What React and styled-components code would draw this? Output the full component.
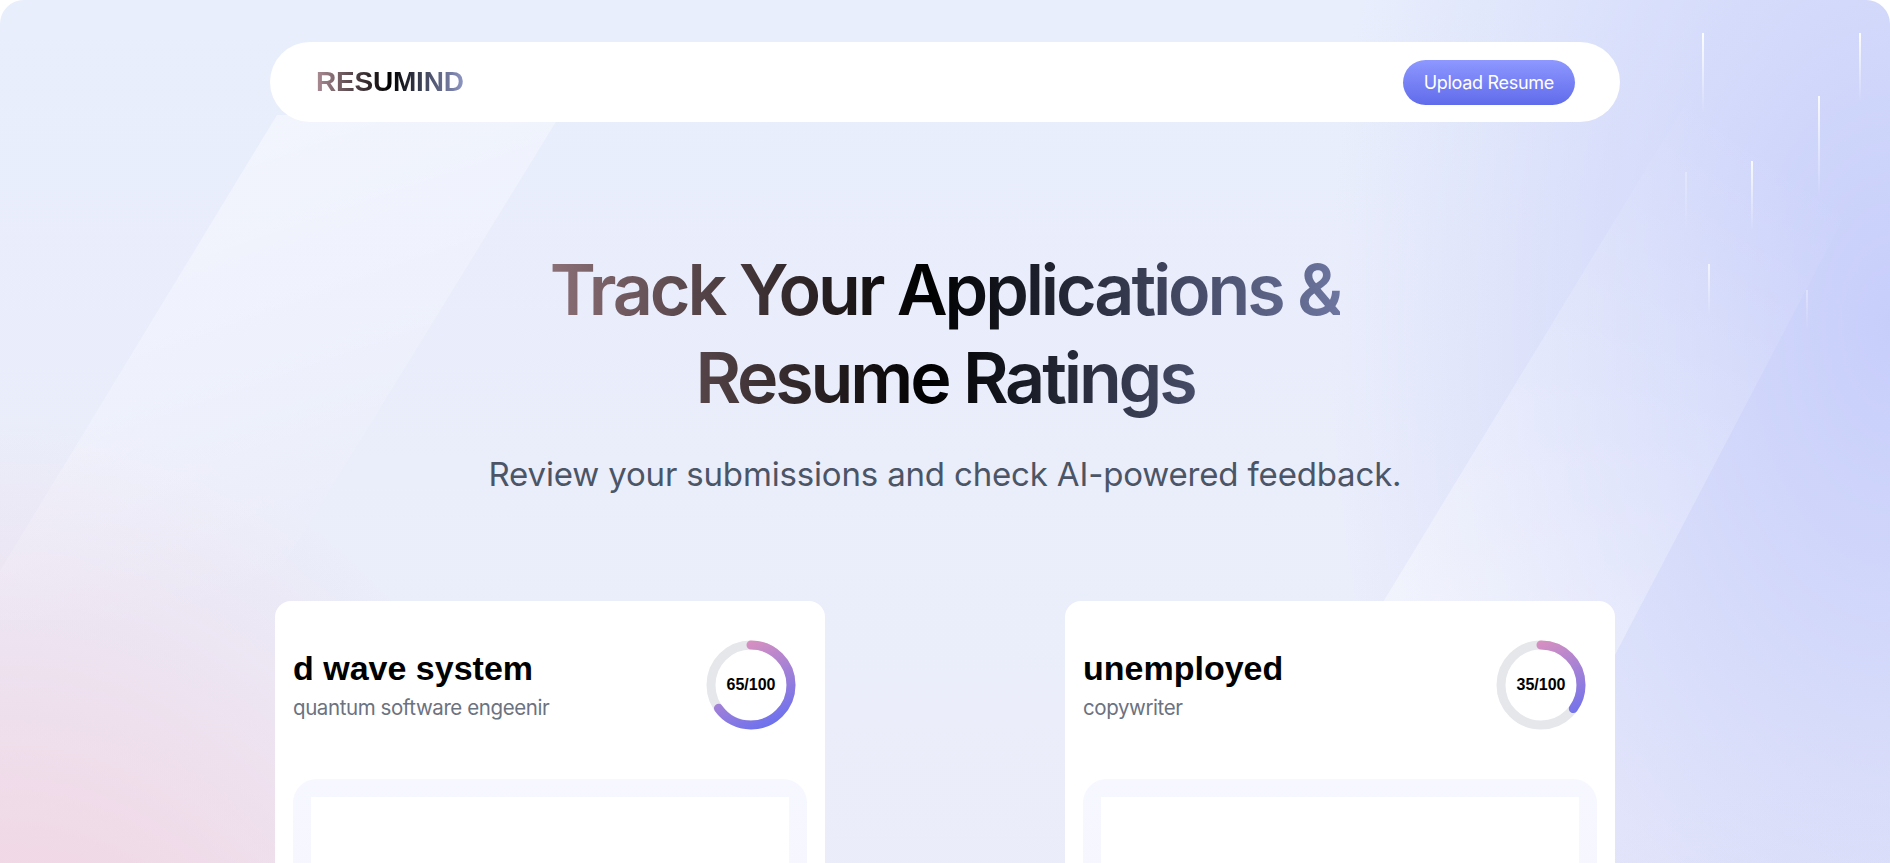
import React from "react";
import styled, { createGlobalStyle } from "styled-components";

const GlobalStyle = createGlobalStyle`
	html, body {
		margin: 0;
		padding: 0;
		background: #ffffff;
	}
	* {
		box-sizing: border-box;
	}
`;

const resumes = [
	{ id: 1, company: "d wave system", job: "quantum software engeenir", score: 65 },
	{ id: 2, company: "unemployed", job: "copywriter", score: 35 },
];

const streaks = [
	{ x: 1702, y: 33, h: 80, o: 0.95 },
	{ x: 1859, y: 33, h: 68, o: 0.95 },
	{ x: 1818, y: 96, h: 100, o: 0.9 },
	{ x: 1751, y: 161, h: 70, o: 0.9 },
	{ x: 1685, y: 172, h: 60, o: 0.3 },
	{ x: 1708, y: 264, h: 52, o: 0.7 },
	{ x: 1806, y: 290, h: 40, o: 0.35 },
];

function Backdrop() {
	return (
		<BackdropSvg width="1890" height="863" viewBox="0 0 1890 863" preserveAspectRatio="none">
			<defs>
				<linearGradient id="bandLeft" x1="0" y1="0" x2="0.4" y2="1">
					<stop offset="0" stopColor="#ffffff" stopOpacity="0.5" />
					<stop offset="0.6" stopColor="#ffffff" stopOpacity="0.22" />
					<stop offset="1" stopColor="#ffffff" stopOpacity="0" />
				</linearGradient>
				<linearGradient id="bandRight" x1="0" y1="1" x2="0.6" y2="0">
					<stop offset="0" stopColor="#ffffff" stopOpacity="0.5" />
					<stop offset="1" stopColor="#ffffff" stopOpacity="0" />
				</linearGradient>
				<linearGradient id="streak" x1="0" y1="0" x2="0" y2="1">
					<stop offset="0" stopColor="#ffffff" stopOpacity="1" />
					<stop offset="1" stopColor="#ffffff" stopOpacity="0" />
				</linearGradient>
			</defs>
			<polygon points="277,115 560,115 250,620 -30,620" fill="url(#bandLeft)" />
			<polygon points="1700,80 1900,110 1560,760 1360,640" fill="url(#bandRight)" />
			{streaks.map((s, i) => (
				<rect key={i} x={s.x} y={s.y} width="2" height={s.h} fill="url(#streak)" opacity={s.o} />
			))}
		</BackdropSvg>
	);
}

function ScoreCircle({ score }) {
	const r = 40;
	const c = 2 * Math.PI * r;
	const offset = c * (1 - score / 100);
	const id = `ring${score}`;
	return (
		<Ring>
			<svg width="92" height="92" viewBox="0 0 92 92">
				<defs>
					<linearGradient id={id} gradientUnits="userSpaceOnUse" x1="92" y1="30" x2="0" y2="75">
						<stop offset="0" stopColor="#e293bb" />
						<stop offset="1" stopColor="#626ef3" />
					</linearGradient>
				</defs>
				<circle cx="46" cy="46" r={r} fill="none" stroke="#e5e7eb" strokeWidth="9" />
				<circle
					cx="46"
					cy="46"
					r={r}
					fill="none"
					stroke={`url(#${id})`}
					strokeWidth="9"
					strokeLinecap="round"
					strokeDasharray={c}
					strokeDashoffset={offset}
					transform="rotate(-90 46 46)"
				/>
			</svg>
			<RingLabel>{score}/100</RingLabel>
		</Ring>
	);
}

function ResumeCard({ resume }) {
	return (
		<Card>
			<CardHeader>
				<CardText>
					<Company>{resume.company}</Company>
					<Job>{resume.job}</Job>
				</CardText>
				<ScoreCircle score={resume.score} />
			</CardHeader>
			<Preview>
				<PreviewSheet />
			</Preview>
		</Card>
	);
}

export default function App() {
	return (
		<>
			<GlobalStyle />
			<Main>
				<Backdrop />
				<Navbar>
					<Logo>RESUMIND</Logo>
					<UploadButton>Upload Resume</UploadButton>
				</Navbar>
				<Hero>
					<Heading>
						Track Your Applications &amp;
						<br />
						Resume Ratings
					</Heading>
					<Subheading>Review your submissions and check AI-powered feedback.</Subheading>
				</Hero>
				<Cards>
					{resumes.map((r) => (
						<ResumeCard key={r.id} resume={r} />
					))}
				</Cards>
			</Main>
		</>
	);
}

const Main = styled.main`
	position: relative;
	min-height: 100vh;
	overflow: hidden;
	border-radius: 24px;
	padding-top: 42px;
	padding-bottom: 60px;
	background:
		radial-gradient(ellipse 34% 68% at 0% 100%, rgba(243, 206, 220, 1) 0%, rgba(243, 206, 220, 0.85) 35%, rgba(243, 206, 220, 0) 100%),
		radial-gradient(ellipse 38% 95% at 100% 25%, rgba(199, 206, 250, 1), rgba(199, 206, 250, 0) 78%),
		radial-gradient(ellipse 40% 50% at 100% 100%, rgba(222, 222, 248, 1), rgba(222, 222, 248, 0) 80%),
		linear-gradient(180deg, #e8eefc 0%, #ebedfa 55%, #eeebf7 100%);
	font-family: Inter, "Noto Sans", sans-serif;
`;

const BackdropSvg = styled.svg`
	position: absolute;
	top: 0;
	left: 0;
	pointer-events: none;
`;

const Navbar = styled.nav`
	position: relative;
	width: 1350px;
	height: 80px;
	margin: 0 auto;
	display: flex;
	align-items: center;
	justify-content: space-between;
	padding: 0 45px 0 46px;
	background: #ffffff;
	border-radius: 9999px;
`;

const Logo = styled.span`
	font-family: "Liberation Sans", Arial, sans-serif;
	font-weight: 700;
	font-size: 28px;
	letter-spacing: -0.2px;
	background: linear-gradient(to right, #ab8c95, #000000, #8e97c5);
	-webkit-background-clip: text;
	background-clip: text;
	color: transparent;
`;

const UploadButton = styled.button`
	height: 45px;
	padding: 0 21px;
	border: 0;
	border-radius: 9999px;
	background: linear-gradient(to bottom, #8e98ff, #606beb);
	color: #ffffff;
	font-family: Inter, sans-serif;
	font-weight: 400;
	font-size: 18px;
	letter-spacing: -0.3px;
	cursor: pointer;
`;

const Hero = styled.section`
	position: relative;
	display: flex;
	flex-direction: column;
	align-items: center;
	text-align: center;
	margin-top: 124px;
	gap: 30px;
`;

const Heading = styled.h1`
	margin: 0;
	font-family: Inter, sans-serif;
	font-weight: 600;
	font-size: 70px;
	line-height: 88px;
	letter-spacing: -0.045em;
	background: linear-gradient(to right, #8c7077 0%, #000000 48%, #6d76a0 100%);
	-webkit-background-clip: text;
	background-clip: text;
	color: transparent;
`;

const Subheading = styled.p`
	margin: 0;
	font-family: Inter, sans-serif;
	font-weight: 400;
	font-size: 33px;
	line-height: 44px;
	letter-spacing: -0.005em;
	color: #4b5566;
`;

const Cards = styled.section`
	position: relative;
	width: 1340px;
	margin: 105px auto 0;
	display: flex;
	justify-content: space-between;
`;

const Card = styled.div`
	width: 550px;
	display: flex;
	flex-direction: column;
	padding: 38px 18px 0;
	background: #ffffff;
	border-radius: 16px;
`;

const CardHeader = styled.div`
	display: flex;
	align-items: center;
	justify-content: space-between;
	padding-right: 10px;
`;

const CardText = styled.div`
	display: flex;
	flex-direction: column;
	gap: 6px;
`;

const Company = styled.h2`
	margin: 0;
	font-family: "Liberation Sans", Arial, sans-serif;
	font-weight: 700;
	font-size: 34px;
	line-height: 40px;
	color: #000000;
`;

const Job = styled.h3`
	margin: 0;
	font-family: Inter, sans-serif;
	font-weight: 400;
	font-size: 20.5px;
	line-height: 28px;
	letter-spacing: -0.02em;
	color: #6b7280;
`;

const Ring = styled.div`
	position: relative;
	width: 92px;
	height: 92px;
	display: flex;
	align-items: center;
	justify-content: center;
	svg {
		position: absolute;
		inset: 0;
	}
`;

const RingLabel = styled.span`
	position: relative;
	font-family: "Liberation Sans", Arial, sans-serif;
	font-weight: 600;
	font-size: 16px;
	color: #000000;
`;

const Preview = styled.div`
	margin-top: 48px;
	padding: 18px;
	border-radius: 24px;
	background: linear-gradient(to bottom, #f6f7ff, #f2f4fd);
`;

const PreviewSheet = styled.div`
	height: 420px;
	background: #ffffff;
`;
